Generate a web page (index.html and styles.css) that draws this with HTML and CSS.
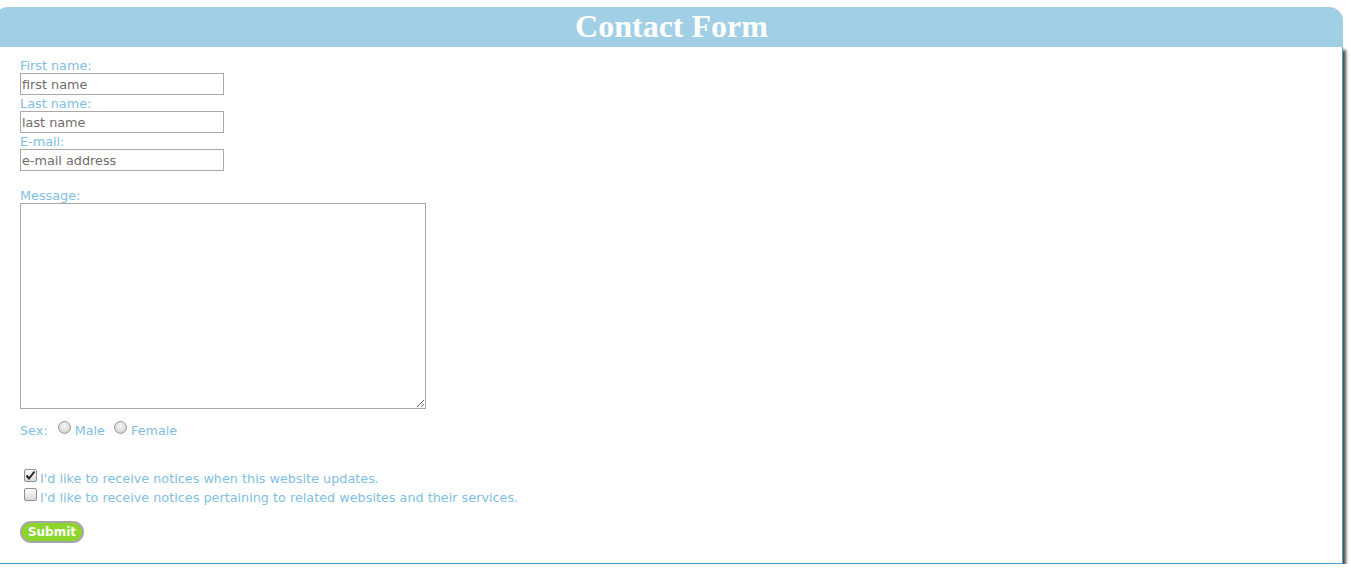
FILE: index.html
```html
<!DOCTYPE html>
<html>
<head>
<meta charset="utf-8">
<title>Contact Form</title>
<link rel="stylesheet" href="styles.css">
</head>
<body>
<div class="card">
  <h1 class="head">Contact Form</h1>
  <form class="body">
    <label class="lbl" for="fn">First name:</label>
    <input class="field" id="fn" type="text" placeholder="first name">
    <label class="lbl" for="ln">Last name:</label>
    <input class="field" id="ln" type="text" placeholder="last name">
    <label class="lbl" for="em">E-mail:</label>
    <input class="field" id="em" type="text" placeholder="e-mail address">
    <div class="gap"></div>
    <label class="lbl" for="msg">Message:</label>
    <textarea class="msg" id="msg"></textarea>
    <div class="sex">
      <span>Sex:</span>
      <label class="opt"><input class="radio" type="radio" name="sex">Male</label>
      <label class="opt"><input class="radio" type="radio" name="sex">Female</label>
    </div>
    <div class="checks">
      <label class="chk"><input class="box" type="checkbox" checked>I'd like to receive notices when this website updates.</label>
      <label class="chk"><input class="box" type="checkbox">I'd like to receive notices pertaining to related websites and their services.</label>
    </div>
    <button class="submit" type="button">Submit</button>
  </form>
</div>
</body>
</html>
```

FILE: styles.css
```css
html, body {
  margin: 0;
  padding: 0;
  background: #fff;
}
body {
  padding-top: 7px;
  font-family: "DejaVu Sans", Verdana, sans-serif;
  font-size: 12.8px;
  overflow: hidden;
}
.card {
  width: 1349px;
  margin-left: -6px;
}
.head {
  margin: 0;
  height: 40px;
  padding-left: 6px;
  line-height: 38px;
  background: #a1cfe6;
  border-radius: 14px 14px 0 0;
  color: #fff;
  text-align: center;
  font-family: "Liberation Serif", "Times New Roman", serif;
  font-weight: bold;
  font-size: 32px;
}
.body {
  display: flex;
  flex-direction: column;
  align-items: flex-start;
  height: 506px;
  padding: 10px 0 0 26px;
  background: #fff;
  border-right: 1px solid #4f9fcf;
  border-bottom: 1px solid #4f9fcf;
  box-shadow: 3px 3px 3px #4a4a4a;
  box-sizing: content-box;
}
.lbl {
  display: block;
  height: 16px;
  line-height: 17px;
  color: #7fc0e2;
}
.field {
  display: block;
  box-sizing: border-box;
  width: 204px;
  height: 22px;
  margin: 0;
  padding: 0 1px;
  border: 1px solid #a9a9a9;
  font-family: "DejaVu Sans", sans-serif;
  font-size: 12.8px;
  color: #555;
}
.field::placeholder {
  color: #716c6a;
  opacity: 1;
}
.gap {
  height: 16px;
}
.msg {
  display: block;
  box-sizing: border-box;
  width: 406px;
  height: 206px;
  margin: 0;
  border: 1px solid #a9a9a9;
  font-family: "DejaVu Sans", sans-serif;
  font-size: 12.8px;
}
.sex {
  display: flex;
  align-items: center;
  margin-top: 12px;
  height: 18px;
  color: #7fc0e2;
}
.opt {
  display: flex;
  align-items: center;
  gap: 4px;
  margin-left: 9px;
}
.opt:first-of-type {
  margin-left: 10px;
}
.radio {
  appearance: none;
  -webkit-appearance: none;
  width: 13px;
  height: 13px;
  margin: 0;
  position: relative;
  top: -3px;
  border: 1px solid #9a9a9a;
  border-radius: 50%;
  background: radial-gradient(circle at 50% 35%, #f6f6f6 0%, #dcdcdc 60%, #c4c4c4 100%);
  box-sizing: border-box;
}
.checks {
  display: flex;
  flex-direction: column;
  margin-top: 30px;
  padding-left: 4px;
}
.chk {
  display: flex;
  align-items: center;
  gap: 3px;
  height: 19px;
  color: #7fc0e2;
}
.box {
  appearance: none;
  -webkit-appearance: none;
  width: 13px;
  height: 13px;
  margin: 0;
  position: relative;
  top: -3px;
  border: 1px solid #8e8e8e;
  border-radius: 2px;
  background: linear-gradient(#fbfbfb, #dadada);
  box-sizing: border-box;
}
.box:checked {
  background: url("data:image/svg+xml;utf8,<svg xmlns='http://www.w3.org/2000/svg' width='11' height='11' viewBox='0 0 11 11'><path d='M1.5 5.5 L4 8.5 L9.5 1.5' fill='none' stroke='%23222' stroke-width='2'/></svg>") center/11px 11px no-repeat, linear-gradient(#fbfbfb, #dadada);
}
.submit {
  margin-top: 14px;
  box-sizing: border-box;
  width: 64px;
  height: 22px;
  padding: 0;
  border: 2px solid #a6a6a6;
  border-radius: 11px;
  background: #8cd62c;
  color: #fff;
  font-family: "DejaVu Sans", sans-serif;
  font-weight: bold;
  font-size: 12px;
  line-height: 18px;
}
```
